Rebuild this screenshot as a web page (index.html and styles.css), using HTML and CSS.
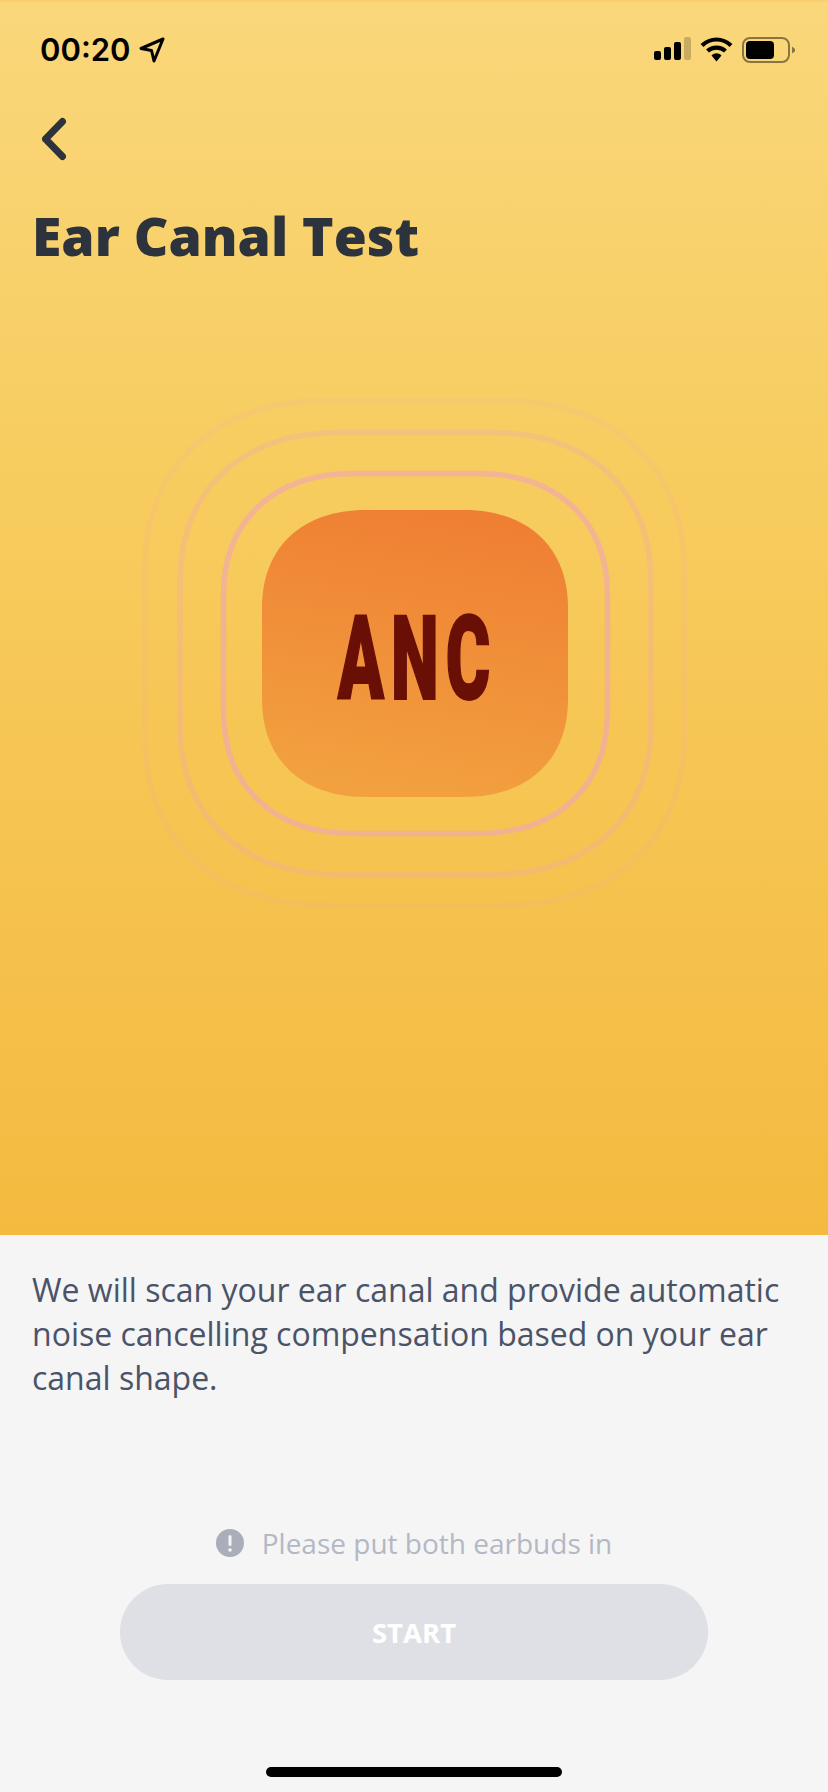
FILE: index.html
```html
<!DOCTYPE html>
<html lang="en">

<head>
    <meta charset="UTF-8" />
    <title>Ear Canal Test</title>
    <link rel="stylesheet" href="styles.css">
</head>

<body>
    <div class="screen">
        <header class="hero">
            <div class="status-bar">
                <div class="status-time">
                    <span>00:20</span>
                    <svg class="status-arrow" width="26" height="26" viewBox="0 0 26 26">
                        <path d="M24 2 L2 11.5 L12.5 13.5 L15 24 Z" fill="none" stroke="#000" stroke-width="3"
                            stroke-linejoin="round" />
                    </svg>
                </div>
                <div class="status-icons">
                    <svg width="37" height="24" viewBox="0 0 37 24">
                        <rect x="0" y="14" width="7" height="9" rx="2" />
                        <rect x="10" y="10" width="7" height="13" rx="2" />
                        <rect x="20" y="5" width="7" height="18" rx="2" />
                        <rect x="30" y="0" width="7" height="23" rx="2" opacity="0.2" />
                    </svg>
                    <svg width="33" height="25" viewBox="0 0 33 25">
                        <path d="M2 8.5 C10.5 0.5 22.5 0.5 31 8.5" fill="none" stroke="#000" stroke-width="4.2" />
                        <path d="M7.5 14 C12.5 9.5 20.5 9.5 25.5 14" fill="none" stroke="#000" stroke-width="4.2" />
                        <path d="M11.5 18.5 C14.5 15.5 18.5 15.5 21.5 18.5 L16.5 24.5 Z" />
                    </svg>
                    <svg width="54" height="26" viewBox="0 0 54 26">
                        <rect x="1" y="1" width="46" height="24" rx="7" fill="none" stroke="#000" stroke-width="2"
                            opacity="0.45" />
                        <rect x="4" y="4" width="28" height="18" rx="4" />
                        <path d="M50 9.5 L53 12 V14.5 L50 16.5 Z" opacity="0.45" />
                    </svg>
                </div>
            </div>
            <svg class="back-icon" width="24" height="44" viewBox="0 0 24 44">
                <path d="M20.500 4.500 L3.500 22 L20.500 39.500" fill="none" stroke="#2d333c" stroke-width="7"
                    stroke-linecap="round" stroke-linejoin="round" />
            </svg>
            <h1 class="title">Ear Canal Test</h1>
            <div class="anc-badge">
                <svg width="545" height="510" viewBox="0 0 545 510">
                    <defs>
                        <linearGradient id="anc-fill" x1="0.6" y1="0" x2="0.4" y2="1">
                            <stop offset="0" stop-color="#ef7f33" />
                            <stop offset="1" stop-color="#f2a140" />
                        </linearGradient>
                    </defs>
                    <path class="ring ring-outer"
                        d="M186.100 2.500 H358.900 C472.300 2.500 542.500 68.150 542.500 174.200 V335.800 C542.500 441.850 472.300 507.500 358.900 507.500 H186.100 C72.700 507.500 2.500 441.850 2.500 335.800 V174.200 C2.500 68.150 72.700 2.500 186.100 2.500 Z" />
                    <path class="ring ring-middle"
                        d="M198.100 34.500 H348.900 C447.800 34.500 509 92 509 184.800 V326.200 C509 419 447.800 476.500 348.900 476.500 H198.100 C99.200 476.500 38 419 38 326.200 V184.800 C38 92 99.200 34.500 198.100 34.500 Z" />
                    <path class="ring ring-inner"
                        d="M212.100 75.500 H334.900 C415.600 75.500 465.500 122.300 465.500 197.900 V313.100 C465.500 388.700 415.600 435.500 334.900 435.500 H212.100 C131.400 435.500 81.500 388.700 81.500 313.100 V197.900 C81.500 122.300 131.400 75.500 212.100 75.500 Z" />
                    <path fill="url(#anc-fill)"
                        d="M224 112 H322 C386.200 112 426 149.300 426 209.600 V301.400 C426 361.700 386.200 399 322 399 H224 C159.800 399 120 361.700 120 301.400 V209.600 C120 149.300 159.800 112 224 112 Z" />
                </svg>
                <span class="anc-label">ANC</span>
            </div>
        </header>
        <main class="panel">
            <p class="description">We will scan your ear canal and provide automatic noise cancelling compensation
                based on your ear canal shape.</p>
            <div class="hint">
                <svg width="28" height="28" viewBox="0 0 28 28">
                    <circle cx="14" cy="14" r="14" fill="#a9aeba" />
                    <rect x="12.500" y="6" width="3" height="11" rx="1.500" fill="#f5f5f5" />
                    <circle cx="14" cy="21" r="1.800" fill="#f5f5f5" />
                </svg>
                <span>Please put both earbuds in</span>
            </div>
            <button class="start-button" type="button">START</button>
            <div class="home-bar"></div>
        </main>
    </div>
</body>

</html>
```

FILE: styles.css
```css
* {
    box-sizing: border-box;
}

body {
    margin: 0;
    font-family: "Open Sans", sans-serif;
    background: #f5f5f5;
}

.screen {
    display: flex;
    flex-direction: column;
    width: 828px;
    height: 1792px;
}

/* parte de cima com o degrade */
.hero {
    height: 1235px;
    padding-top: 35px;
    border-top: 2px solid #fbcf6d;
    background: linear-gradient(180deg, #fad77b 0%, #f7cc5e 40%, #f4ba40 100%);
}

.status-bar {
    display: flex;
    justify-content: space-between;
    align-items: flex-start;
    padding: 0 32px 0 40px;
}

.status-time {
    display: flex;
    align-items: center;
    gap: 8px;
    font-family: Inter, sans-serif;
    font-size: 31px;
    font-weight: 600;
    line-height: 26px;
    color: #000;
}

.status-icons {
    display: flex;
    align-items: flex-start;
    gap: 9px;
}

.back-icon {
    display: block;
    margin: 54px 0 0 42px;
}

.title {
    margin: 38px 0 0 32px;
    font-size: 53.5px;
    font-weight: 800;
    line-height: 74px;
    color: #2d333c;
}

/* icone central com os aneis */
.anc-badge {
    position: relative;
    display: flex;
    justify-content: center;
    margin-top: 125px;
}

.ring {
    fill: none;
    stroke: #f0a8b0;
    stroke-width: 5.5;
}

.ring-inner {
    stroke-opacity: 0.65;
}

.ring-middle {
    stroke-opacity: 0.32;
}

.ring-outer {
    stroke-opacity: 0.15;
}

.anc-label {
    position: absolute;
    top: 50%;
    left: 50%;
    margin-top: 6px;
    padding-left: 12px;
    font-family: Roboto, sans-serif;
    font-size: 117px;
    font-weight: 900;
    line-height: 1;
    letter-spacing: 12px;
    color: #690f06;
    -webkit-text-stroke: 2px #690f06;
    transform: translate(-50%, -50%) scaleX(0.58);
}

.panel {
    display: flex;
    flex: 1;
    flex-direction: column;
    align-items: center;
    padding-top: 33px;
}

.description {
    margin: 0;
    padding: 0 32px;
    font-size: 32px;
    line-height: 44px;
    color: #4a5368;
}

.hint {
    display: flex;
    align-items: center;
    gap: 18px;
    margin-top: 123px;
    font-size: 28px;
    line-height: 40px;
    color: #b3b8c4;
}

.start-button {
    width: 588px;
    height: 96px;
    margin-top: 21px;
    border: 0;
    border-radius: 48px;
    background: #dfe0e5;
    font-family: inherit;
    font-size: 27.5px;
    font-weight: 700;
    color: #fff;
}

.home-bar {
    width: 296px;
    height: 10px;
    margin-top: 87px;
    border-radius: 5px;
    background: #000;
}
```
